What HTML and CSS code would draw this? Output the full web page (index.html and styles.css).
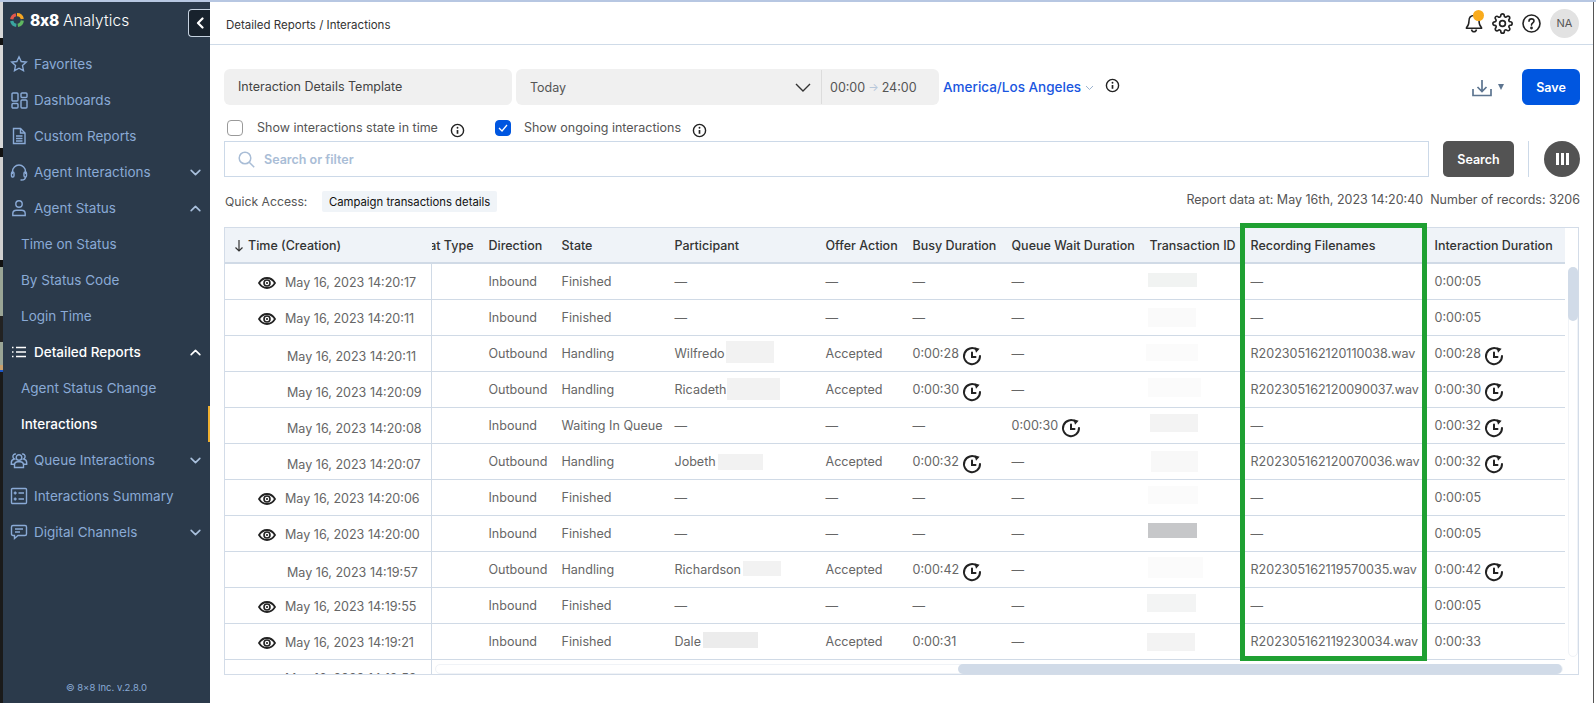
FILE: index.html
```html
<!DOCTYPE html>
<html lang="en">
<head>
<meta charset="utf-8">
<title>8x8 Analytics</title>
<link rel="stylesheet" href="styles.css">
</head>
<body>
<svg class="defs" width="0" height="0" aria-hidden="true">
  <symbol id="i-hist" viewBox="0 0 20 20"><g fill="none" stroke="#222" stroke-width="2" stroke-linecap="round"><path d="M14.600 3.600A8 8 0 1 0 18 10"/><path d="M10 6.500v4.500h3.500"/></g><path d="M12.600 1.200l5 1.600-3.600 4z" fill="#222"/></symbol>
  <symbol id="i-eye" viewBox="0 0 18 12"><path d="M1 6c2-3.200 4.800-5 8-5s6 1.800 8 5c-2 3.200-4.800 5-8 5s-6-1.800-8-5z" fill="none" stroke="#222" stroke-width="1.800"/><circle cx="9" cy="6" r="3" fill="none" stroke="#222" stroke-width="1.600"/><circle cx="9" cy="6" r="1.100" fill="#222"/></symbol>
  <symbol id="i-info" viewBox="0 0 16 16"><circle cx="8" cy="8" r="6.500" fill="none" stroke="#222" stroke-width="1.500"/><circle cx="8" cy="5" r="1" fill="#222"/><path d="M8 7.500v4" stroke="#222" stroke-width="1.800"/></symbol>
  <symbol id="i-down" viewBox="0 0 12 12"><path d="M2 4l4 4 4-4" fill="none" stroke="currentColor" stroke-width="1.500" stroke-linecap="round" stroke-linejoin="round"/></symbol>
  <symbol id="i-up" viewBox="0 0 12 12"><path d="M2 8l4-4 4 4" fill="none" stroke="currentColor" stroke-width="1.500" stroke-linecap="round" stroke-linejoin="round"/></symbol>
</svg>
<div class="app">
  <div class="strip"></div>
  <aside class="side">
    <div class="brand">
      <svg class="ring" viewBox="0 0 14 14"><g fill="none" stroke-width="3.200"><path d="M7 1.600A5.400 5.400 0 0 1 12.300 6" stroke="#f5a623"/><path d="M12.300 7.500A5.400 5.400 0 0 1 7.800 12.300" stroke="#5fb760"/><path d="M6.300 12.400A5.400 5.400 0 0 1 1.700 8" stroke="#3aa6a0"/><path d="M1.700 6.300A5.400 5.400 0 0 1 6 1.700" stroke="#e2574c"/></g></svg>
      <span class="b8">8x8</span><span class="ban">Analytics</span>
      <button class="collapse"><svg width="10" height="12" viewBox="0 0 10 12"><path d="M7.500 1.500L3 6l4.500 4.500" fill="none" stroke="#fff" stroke-width="2.200" stroke-linecap="round" stroke-linejoin="round"/></svg></button>
    </div>
    <nav class="nav">
      <div class="ni"><svg class="nic" viewBox="0 0 18 18"><path d="M9 1.800l2.200 4.700 5.100.6-3.800 3.500 1 5.100L9 13.200l-4.500 2.500 1-5.100L1.700 7.100l5.100-.6z"/></svg><span>Favorites</span></div>
      <div class="ni"><svg class="nic" viewBox="0 0 18 18"><rect x="2" y="2" width="6" height="8" rx="1"/><rect x="11" y="2" width="6" height="4.500" rx="1"/><rect x="2" y="12.500" width="6" height="4.500" rx="1"/><rect x="11" y="9" width="6" height="8" rx="1"/></svg><span>Dashboards</span></div>
      <div class="ni"><svg class="nic" viewBox="0 0 18 18"><path d="M3.500 1.500h7l4.500 4.500v10.500h-11.500z"/><path d="M10.500 1.500v4.500h4.500M6 9h6.500M6 11.500h6.500M6 14h6.500"/></svg><span>Custom Reports</span></div>
      <div class="ni"><svg class="nic" viewBox="0 0 18 18"><path d="M2.500 11V8.500a6.500 6.500 0 0 1 13 0V11"/><rect x="1.500" y="9" width="2.500" height="5" rx="1.200"/><rect x="14" y="9" width="2.500" height="5" rx="1.200"/><path d="M15.500 14c0 2-1.500 3-4 3h-1"/></svg><span>Agent Interactions</span><svg class="chev"><use href="#i-down"/></svg></div>
      <div class="ni"><svg class="nic" viewBox="0 0 18 18"><circle cx="9" cy="5" r="3.200"/><path d="M2.800 16.500v-1.800c0-2 1.700-3.400 3.700-3.400h5c2 0 3.700 1.400 3.700 3.400v1.800z"/></svg><span>Agent Status</span><svg class="chev"><use href="#i-up"/></svg></div>
      <div class="ni sub">Time on Status</div>
      <div class="ni sub">By Status Code</div>
      <div class="ni sub">Login Time</div>
      <div class="ni on"><svg class="nic" viewBox="0 0 18 18"><path d="M6 4.500h10M6 9h10M6 13.500h10M2 4.500h1.500M2 9h1.500M2 13.500h1.500"/></svg><span>Detailed Reports</span><svg class="chev"><use href="#i-up"/></svg></div>
      <div class="ni sub">Agent Status Change</div>
      <div class="ni sub on mark">Interactions</div>
      <div class="ni"><svg class="nic" viewBox="0 0 18 18"><circle cx="9" cy="6.500" r="2.800"/><path d="M4.500 16.500v-2.300c0-2 1.500-3.400 3.300-3.400h2.400c1.800 0 3.300 1.400 3.300 3.400v2.300z"/><path d="M6 3.200a2.400 2.400 0 0 0-3 3 2.400 2.400 0 0 0 1.300 1.800c-1.900.5-3 2-3 3.800v1.500h3M12 3.200a2.400 2.400 0 0 1 3 3 2.400 2.400 0 0 1-1.300 1.800c1.900.5 3 2 3 3.800v1.500h-3"/></svg><span>Queue Interactions</span><svg class="chev"><use href="#i-down"/></svg></div>
      <div class="ni"><svg class="nic" viewBox="0 0 18 18"><rect x="1.500" y="1.500" width="15" height="15" rx="1"/><path d="M8.500 6h5.500M8.500 12h5.500M3.700 6h3M5.200 4.500v3M3.700 12h3M5.200 10.500v3"/></svg><span>Interactions Summary</span></div>
      <div class="ni"><svg class="nic" viewBox="0 0 18 18"><path d="M3 2.500h12c1 0 1.500.6 1.500 1.500v7c0 1-.5 1.500-1.500 1.500H8l-3.500 3v-3H3c-1 0-1.500-.5-1.500-1.500V4c0-.9.5-1.500 1.500-1.500z"/><path d="M5 6h8M5 9h5"/></svg><span>Digital Channels</span><svg class="chev"><use href="#i-down"/></svg></div>
    </nav>
    <div class="copy">© 8x8 Inc. v.2.8.0</div>
  </aside>
  <main class="main">
    <header class="top">
      <div class="crumb">Detailed Reports / Interactions</div>
      <div class="topicons">
        <span class="bell"><svg width="18" height="20" viewBox="0 0 18 20"><path d="M9 2.500c-3.200 0-5 2.300-5 5.300 0 3.700-.8 5.200-2.500 6.700v.8h15v-.8c-1.700-1.500-2.500-3-2.500-6.700 0-3-1.800-5.300-5-5.300zM6.500 16.500c.3 1.500 1.200 2.200 2.500 2.200s2.200-.7 2.500-2.200" fill="none" stroke="#222" stroke-width="1.500"/></svg><i class="dot"></i></span>
        <svg class="gear" width="21" height="21" viewBox="0 0 24 24" fill="none" stroke="#222" stroke-width="1.900"><circle cx="12" cy="12" r="3.300"/><path d="M19.400 15a1.650 1.650 0 0 0 .33 1.820l.06.06a2 2 0 0 1 0 2.830 2 2 0 0 1-2.830 0l-.06-.06a1.650 1.650 0 0 0-1.820-.33 1.650 1.650 0 0 0-1 1.510V21a2 2 0 0 1-2 2 2 2 0 0 1-2-2v-.09A1.650 1.650 0 0 0 9 19.400a1.650 1.650 0 0 0-1.820.33l-.06.06a2 2 0 0 1-2.830 0 2 2 0 0 1 0-2.830l.06-.06a1.650 1.650 0 0 0 .33-1.820 1.650 1.650 0 0 0-1.510-1H3a2 2 0 0 1-2-2 2 2 0 0 1 2-2h.09A1.650 1.650 0 0 0 4.600 9a1.650 1.650 0 0 0-.33-1.820l-.06-.06a2 2 0 0 1 0-2.830 2 2 0 0 1 2.830 0l.06.06a1.650 1.650 0 0 0 1.820.33H9a1.650 1.650 0 0 0 1-1.510V3a2 2 0 0 1 2-2 2 2 0 0 1 2 2v.09a1.650 1.650 0 0 0 1 1.510 1.650 1.650 0 0 0 1.820-.33l.06-.06a2 2 0 0 1 2.830 0 2 2 0 0 1 0 2.830l-.06.06a1.650 1.650 0 0 0-.33 1.820V9a1.650 1.650 0 0 0 1.510 1H21a2 2 0 0 1 2 2 2 2 0 0 1-2 2h-.09a1.650 1.650 0 0 0-1.510 1z"/></svg>
        <svg class="help" width="19" height="19" viewBox="0 0 19 19" fill="none" stroke="#222" stroke-width="1.600"><circle cx="9.500" cy="9.500" r="8.500"/><path d="M7 7.300c0-1.500 1.100-2.400 2.500-2.400s2.500.9 2.500 2.200c0 1.900-2.500 1.900-2.500 4" stroke-linecap="round"/><circle cx="9.500" cy="14" r=".6" fill="#222"/></svg>
        <span class="avatar">NA</span>
      </div>
    </header>
    <section class="controls">
      <div class="r1">
        <div class="tmpl">Interaction Details Template</div>
        <div class="range">
          <span class="today">Today</span>
          <svg class="rchev" width="16" height="9" viewBox="0 0 16 9"><path d="M1 1l7 7 7-7" fill="none" stroke="#333" stroke-width="1.400"/></svg>
          <span class="times">00:00<em>→</em>24:00</span>
        </div>
        <span class="tz">America/Los Angeles</span>
        <svg class="tzc" width="9" height="6" viewBox="0 0 9 6"><path d="M1 1l3.500 3.500L8 1" fill="none" stroke="#9db4d0" stroke-width="1"/></svg>
        <svg class="inf tzi" width="15" height="15"><use href="#i-info"/></svg>
        <span class="grow"></span>
        <svg class="dl" width="20" height="18" viewBox="0 0 20 18" fill="none" stroke="#5d7590" stroke-width="1.700"><path d="M1 10v6.500h18V10M10 1v11M5.500 8l4.500 4.500L14.500 8"/></svg>
        <i class="caret"></i>
        <button class="save">Save</button>
      </div>
      <div class="r2">
        <label class="chk"><i class="box"></i><span>Show interactions state in time</span></label>
        <svg class="inf i2a" width="15" height="15"><use href="#i-info"/></svg>
        <label class="chk c2"><i class="box checked"><svg width="10" height="8" viewBox="0 0 10 8"><path d="M1 4l3 3 5-6" fill="none" stroke="#fff" stroke-width="1.300"/></svg></i><span>Show ongoing interactions</span></label>
        <svg class="inf i2b" width="15" height="15"><use href="#i-info"/></svg>
      </div>
      <div class="r3">
        <div class="search">
          <svg width="17" height="17" viewBox="0 0 17 17" fill="none" stroke="#a9bdd6" stroke-width="1.500"><circle cx="7" cy="7" r="5.800"/><path d="M11.200 11.200l5 5"/></svg>
          <span>Search or filter</span>
        </div>
        <button class="sbtn">Search</button>
        <i class="vsep"></i>
        <button class="cols"><i></i><i></i><i></i></button>
      </div>
      <div class="r4">
        <span class="qa">Quick Access:</span>
        <span class="chip">Campaign transactions details</span>
        <span class="grow"></span>
        <span class="stat">Report data at: May 16th, 2023 14:20:40</span>
        <span class="stat s2">Number of records: 3206</span>
      </div>
    </section>
    <section class="tablewrap">
      <div class="table">
        <div class="row head">
          <div class="c t"><svg width="10" height="13" viewBox="0 0 10 13"><path d="M5 1v11M1.500 8.500L5 12l3.500-3.500" fill="none" stroke="#333" stroke-width="1.200"/></svg>Time (Creation)</div>
          <div class="c chat"><span>Chat Type</span></div>
          <div class="c">Direction</div><div class="c">State</div><div class="c">Participant</div><div class="c">Offer Action</div><div class="c">Busy Duration</div><div class="c">Queue Wait Duration</div><div class="c">Transaction ID</div><div class="c">Recording Filenames</div><div class="c">Interaction Duration</div>
        </div>

        <div class="row">
          <div class="c t eye"><svg class="e"><use href="#i-eye"/></svg>May 16, 2023 14:20:17</div><div class="c"></div>
          <div class="c">Inbound</div><div class="c">Finished</div><div class="c">—</div><div class="c">—</div><div class="c">—</div><div class="c">—</div>
          <div class="c tid"><i class="rd t1"></i></div><div class="c">—</div><div class="c">0:00:05</div>
        </div>
        <div class="row">
          <div class="c t eye"><svg class="e"><use href="#i-eye"/></svg>May 16, 2023 14:20:11</div><div class="c"></div>
          <div class="c">Inbound</div><div class="c">Finished</div><div class="c">—</div><div class="c">—</div><div class="c">—</div><div class="c">—</div>
          <div class="c tid"><i class="rd t2"></i></div><div class="c">—</div><div class="c">0:00:05</div>
        </div>
        <div class="row">
          <div class="c t low">May 16, 2023 14:20:11</div><div class="c"></div>
          <div class="c">Outbound</div><div class="c">Handling</div><div class="c tid">Wilfredo<i class="rd p1"></i></div><div class="c">Accepted</div>
          <div class="c">0:00:28<svg class="h"><use href="#i-hist"/></svg></div><div class="c">—</div>
          <div class="c tid"><i class="rd t3"></i></div><div class="c">R202305162120110038.wav</div><div class="c">0:00:28<svg class="h"><use href="#i-hist"/></svg></div>
        </div>
        <div class="row">
          <div class="c t low">May 16, 2023 14:20:09</div><div class="c"></div>
          <div class="c">Outbound</div><div class="c">Handling</div><div class="c tid">Ricadeth<i class="rd p2"></i></div><div class="c">Accepted</div>
          <div class="c">0:00:30<svg class="h"><use href="#i-hist"/></svg></div><div class="c">—</div>
          <div class="c tid"><i class="rd t4"></i></div><div class="c">R202305162120090037.wav</div><div class="c">0:00:30<svg class="h"><use href="#i-hist"/></svg></div>
        </div>
        <div class="row">
          <div class="c t low">May 16, 2023 14:20:08</div><div class="c"></div>
          <div class="c">Inbound</div><div class="c">Waiting In Queue</div><div class="c">—</div><div class="c">—</div><div class="c">—</div>
          <div class="c">0:00:30<svg class="h"><use href="#i-hist"/></svg></div>
          <div class="c tid"><i class="rd t5"></i></div><div class="c">—</div><div class="c">0:00:32<svg class="h"><use href="#i-hist"/></svg></div>
        </div>
        <div class="row">
          <div class="c t low">May 16, 2023 14:20:07</div><div class="c"></div>
          <div class="c">Outbound</div><div class="c">Handling</div><div class="c tid">Jobeth<i class="rd p3"></i></div><div class="c">Accepted</div>
          <div class="c">0:00:32<svg class="h"><use href="#i-hist"/></svg></div><div class="c">—</div>
          <div class="c tid"><i class="rd t6"></i></div><div class="c">R202305162120070036.wav</div><div class="c">0:00:32<svg class="h"><use href="#i-hist"/></svg></div>
        </div>
        <div class="row">
          <div class="c t eye"><svg class="e"><use href="#i-eye"/></svg>May 16, 2023 14:20:06</div><div class="c"></div>
          <div class="c">Inbound</div><div class="c">Finished</div><div class="c">—</div><div class="c">—</div><div class="c">—</div><div class="c">—</div>
          <div class="c tid"><i class="rd t7"></i></div><div class="c">—</div><div class="c">0:00:05</div>
        </div>
        <div class="row">
          <div class="c t eye"><svg class="e"><use href="#i-eye"/></svg>May 16, 2023 14:20:00</div><div class="c"></div>
          <div class="c">Inbound</div><div class="c">Finished</div><div class="c">—</div><div class="c">—</div><div class="c">—</div><div class="c">—</div>
          <div class="c tid"><i class="rd t8"></i></div><div class="c">—</div><div class="c">0:00:05</div>
        </div>
        <div class="row">
          <div class="c t low">May 16, 2023 14:19:57</div><div class="c"></div>
          <div class="c">Outbound</div><div class="c">Handling</div><div class="c tid">Richardson<i class="rd p4"></i></div><div class="c">Accepted</div>
          <div class="c">0:00:42<svg class="h"><use href="#i-hist"/></svg></div><div class="c">—</div>
          <div class="c tid"><i class="rd t9"></i></div><div class="c">R202305162119570035.wav</div><div class="c">0:00:42<svg class="h"><use href="#i-hist"/></svg></div>
        </div>
        <div class="row">
          <div class="c t eye"><svg class="e"><use href="#i-eye"/></svg>May 16, 2023 14:19:55</div><div class="c"></div>
          <div class="c">Inbound</div><div class="c">Finished</div><div class="c">—</div><div class="c">—</div><div class="c">—</div><div class="c">—</div>
          <div class="c tid"><i class="rd t10"></i></div><div class="c">—</div><div class="c">0:00:05</div>
        </div>
        <div class="row">
          <div class="c t eye"><svg class="e"><use href="#i-eye"/></svg>May 16, 2023 14:19:21</div><div class="c"></div>
          <div class="c">Inbound</div><div class="c">Finished</div><div class="c tid">Dale<i class="rd p5"></i></div><div class="c">Accepted</div>
          <div class="c">0:00:31</div><div class="c">—</div>
          <div class="c tid"><i class="rd t11"></i></div><div class="c">R202305162119230034.wav</div><div class="c">0:00:33</div>
        </div>
        <div class="row">
          <div class="c t cut">May 16, 2023 14:18:53</div><div class="c"></div>
        </div>
      </div>
      <div class="vtrack"><i></i></div>
      <div class="htrack"><i></i></div>
      <div class="highlight"></div>
    </section>
  </main>
  <div class="edge"></div>
</div>
</body>
</html>
```
FILE: styles.css
```css
* { box-sizing: border-box; }
html, body { margin: 0; height: 100%; overflow: hidden; }
body { font-family: Inter, "Liberation Sans", sans-serif; background: #fff; color: #333; }
.defs { position: absolute; }
.app { display: flex; height: 703px; border-top: 2px solid #b7c7e2; }

.strip {
  width: 3px; flex: none;
  background: linear-gradient(#d8d8d8 0 36px, #111 36px 43px, #d8d8d8 43px 146px, #111 146px 155px, #d0d0d0 155px 258px, #111 258px 265px, #9aa596 265px 314px, #222 314px 340px, #9aa596 340px 363px, #c9a06c 363px 368px, #1c55c8 368px 370px, #1a1a1a 370px);
}
.side { width: 207px; flex: none; background: #2b3a4b; display: flex; flex-direction: column; color: #8aaad6; }
.brand { height: 44px; display: flex; align-items: center; padding: 0 0 8px 7px; position: relative; color: #fff; font-size: 15.500px; }
.ring { width: 14px; height: 14px; margin-right: 6px; }
.b8 { font-weight: 800; font-size: 15.500px; margin-right: 4px; letter-spacing: -0.3px; }
.ban { font-weight: 300; letter-spacing: 0.1px; }
.collapse { position: absolute; right: 0; top: 7px; width: 22px; height: 28px; padding: 0; background: #18222d; border: 1px solid #c6d2e0; border-right: 0; border-radius: 4px 0 0 4px; display: flex; align-items: center; justify-content: center; }

.nav { display: flex; flex-direction: column; }
.ni { height: 36px; display: flex; align-items: center; padding-left: 7px; font-size: 13.500px; position: relative; }
.ni > span { flex: 1; }
.nic { width: 18px; height: 18px; margin-right: 6px; fill: none; stroke: #8aaad6; stroke-width: 1.400; flex: none; }
.chev { width: 13px; height: 13px; margin-right: 8px; color: #a9c0dd; flex: none; }
.ni.sub { padding-left: 18px; }
.ni.on { color: #fff; font-weight: 500; }
.ni.on .nic { stroke: #fff; }
.ni.on .chev { color: #fff; }
.ni.sub.on { font-weight: 500; }
.mark::after { content: ""; position: absolute; right: 0; top: 0; bottom: 0; width: 2px; background: #f0b030; }
.copy { margin-top: auto; text-align: center; font-size: 9.500px; padding-bottom: 10px; color: #8aaad6; }

.main { flex: 1; min-width: 0; display: flex; flex-direction: column; }
.edge { width: 3px; flex: none; background: linear-gradient(90deg, #555 0 1px, #fff 1px); }

.top { height: 43px; flex: none; border-bottom: 1px solid #cfdbe8; display: flex; align-items: center; padding: 0 14px 0 16px; }
.crumb { font-size: 11.500px; color: #333; padding-top: 3px; }
.topicons { margin-left: auto; display: flex; align-items: center; }
.bell { position: relative; display: flex; width: 18px; height: 20px; }
.dot { position: absolute; left: 8px; top: -3px; width: 11px; height: 11px; border-radius: 50%; background: #f9ab1c; }
.gear { margin-left: 9px; }
.help { margin-left: 9px; }
.avatar { margin-left: 9px; width: 29px; height: 29px; border-radius: 50%; background: #e2e2e2; color: #555; font-size: 11px; display: flex; align-items: center; justify-content: center; }

.controls { padding: 24px 13px 0 14px; flex: none; }
.r1 { height: 36px; display: flex; align-items: center; }
.tmpl { width: 288px; height: 36px; background: #f0f0f0; border-radius: 6px; font-size: 12.500px; padding: 0 14px 2px; display: flex; align-items: center; color: #444; }
.range { margin-left: 4px; width: 423px; height: 36px; background: #f0f0f0; border-radius: 6px; display: flex; align-items: center; font-size: 12.500px; color: #555; }
.today { padding-left: 14px; flex: 1; }
.rchev { margin-right: 10px; }
.times { border-left: 1px solid #dcdcdc; height: 34px; width: 118px; display: flex; align-items: center; padding-left: 8px; gap: 3px; }
.times em { font-style: normal; color: #b7c7da; font-size: 11px; }
.tz { margin-left: 4px; font-size: 13.500px; font-weight: 500; color: #1a56e0; }
.tzc { margin-left: 4px; margin-top: 2px; }
.tzi { margin-left: 11px; margin-top: -3px; }
.inf { flex: none; }
.grow { flex: 1; }
.dl { margin-top: 2px; }
.caret { margin-left: 6px; margin-right: 18px; border-left: 3px solid transparent; border-right: 3px solid transparent; border-top: 6px solid #5d7590; margin-top: 0; }
.save { width: 58px; height: 36px; background: #0056e0; border: 0; border-radius: 6px; color: #fff; font: 600 12.500px Inter, sans-serif; }

.r2 { height: 36px; display: flex; align-items: center; font-size: 12.500px; color: #555; padding: 10px 0 0 3px; }
.chk { display: flex; align-items: center; }
.chk span { margin-left: 14px; margin-top: -1px; }
.c2 { margin-left: 30px; }
.c2 span { margin-left: 13px; }
.box { width: 16px; height: 16px; border: 1px solid #9a9a9a; border-radius: 4px; background: #fff; display: flex; align-items: center; justify-content: center; }
.box.checked { background: #0056e0; border-color: #0056e0; }
.i2a { margin-left: 12px; margin-top: 5px; }
.i2b { margin-left: 11px; margin-top: 5px; }

.r3 { height: 36px; display: flex; align-items: center; }
.search { width: 1205px; height: 36px; border: 1px solid #ccd9e8; display: flex; align-items: center; padding-left: 13px; gap: 9px; font-size: 12.500px; font-weight: 600; color: #a9bdd6; }
.sbtn { margin-left: 14px; width: 71px; height: 36px; border: 0; border-radius: 5px; background: #535353; color: #fff; font: 600 12.500px Inter, sans-serif; }
.vsep { margin-left: 14px; width: 1px; height: 36px; background: #ccd9e8; }
.cols { margin-left: 15px; width: 36px; height: 36px; border: 0; border-radius: 50%; background: #535353; display: flex; align-items: center; justify-content: center; gap: 2px; padding: 0; }
.cols i { width: 3px; height: 12px; background: #fff; }

.r4 { height: 50px; display: flex; align-items: center; font-size: 12.500px; padding-left: 1px; padding-bottom: 1px; color: #555; }
.qa { width: 97px; font-size: 12.200px; }
.chip { height: 21px; background: #f0f4f8; color: #111; font-size: 11.300px; padding: 0 7px; display: flex; align-items: center; border-radius: 2px; }
.stat { color: #555; margin-top: -5px; }
.s2 { margin-left: 7px; }

.tablewrap { position: relative; margin-left: 14px; width: 1355px; height: 448px; border: 1px solid #d3dce8; flex: none; }
.table { height: 446px; overflow: hidden; }
.row { display: grid; grid-template-columns: 207px 56.500px 73px 113px 151px 87px 99px 138px 101px 184px 130.500px; width: 1340px; height: 36px; border-bottom: 1px solid #d0dae6; font-size: 12.550px; color: #666; }
.row:last-child { border: 0; }
.head { background: #eff3f8; color: #333; font-weight: 500; border-bottom-width: 2px; font-size: 12.500px; }
.c { display: flex; align-items: center; white-space: nowrap; overflow: visible; min-width: 0; position: relative; }
.t { border-right: 1px solid #d0dae6; }
.head .t { border: 0; padding-left: 9px; gap: 4px; }
.chat { justify-content: flex-end; overflow: hidden; padding-right: 15px; }
.chat span { flex: none; }
.eye { padding: 1px 0 0 33px; }
.low { padding: 6px 0 0 62px; }
.cut { padding: 0 0 0 60px; }
.e { width: 18px; height: 12px; margin-right: 9px; margin-top: 1px; flex: none; }
.h { width: 20px; height: 20px; margin-left: 3px; margin-top: 5px; flex: none; }

.rd { position: absolute; display: block; background: #f3f3f3; }
.tid { position: relative; }
.t1 { left: -2px; top: 9px; width: 49px; height: 14px; background: #f1f3f2; }
.t2 { left: -2px; top: 8px; width: 48px; height: 19px; background: #fafafa; }
.t3 { left: -4px; top: 8px; width: 52px; height: 17px; background: #fbfbfb; }
.t4 { left: -2px; top: 6px; width: 53px; height: 19px; background: #fbfbfb; }
.t5 { left: 0; top: 6px; width: 48px; height: 18px; background: #f3f3f3; }
.t6 { left: 1px; top: 7px; width: 47px; height: 21px; background: #f8f8f8; }
.t7 { left: -2px; top: 6px; width: 50px; height: 18px; background: #fbfbfb; }
.t8 { left: -2px; top: 7px; width: 49px; height: 15px; background: #c6c7c9; }
.t9 { left: -2px; top: 5px; width: 55px; height: 21px; background: #fbfbfb; }
.t10 { left: -3px; top: 6px; width: 49px; height: 18px; background: #f3f4f4; }
.t11 { left: -3px; top: 9px; width: 48px; height: 18px; background: #f3f3f3; }
.p1 { left: 51px; top: 5px; width: 48px; height: 22px; background: #f2f2f2; }
.p2 { left: 52px; top: 6px; width: 53px; height: 22px; background: #f2f2f2; }
.p3 { left: 43px; top: 10px; width: 45px; height: 16px; background: #f2f2f2; }
.p4 { left: 68px; top: 9px; width: 38px; height: 15px; background: #f2f2f2; }
.p5 { left: 28px; top: 8px; width: 55px; height: 16px; background: #ececec; }

.vtrack { position: absolute; left: 1343px; top: 39px; width: 10px; height: 390px; border: 1px solid #f0f3f7; border-radius: 5px; }
.vtrack i { display: block; position: absolute; left: -1px; top: -1px; width: 10px; height: 54px; background: #d1dbe8; border-radius: 5px; }
.htrack { position: absolute; left: 210px; top: 436px; width: 1128px; height: 10px; background: #fff; border: 1px solid #f0f3f7; border-radius: 5px; }
.htrack i { display: block; position: absolute; right: 0; top: -1px; width: 604px; height: 10px; background: #d1dbe8; border-radius: 5px; }
.highlight { position: absolute; left: 1015px; top: -5px; width: 187px; height: 438px; border: 5px solid #1fa032; pointer-events: none; }
```
